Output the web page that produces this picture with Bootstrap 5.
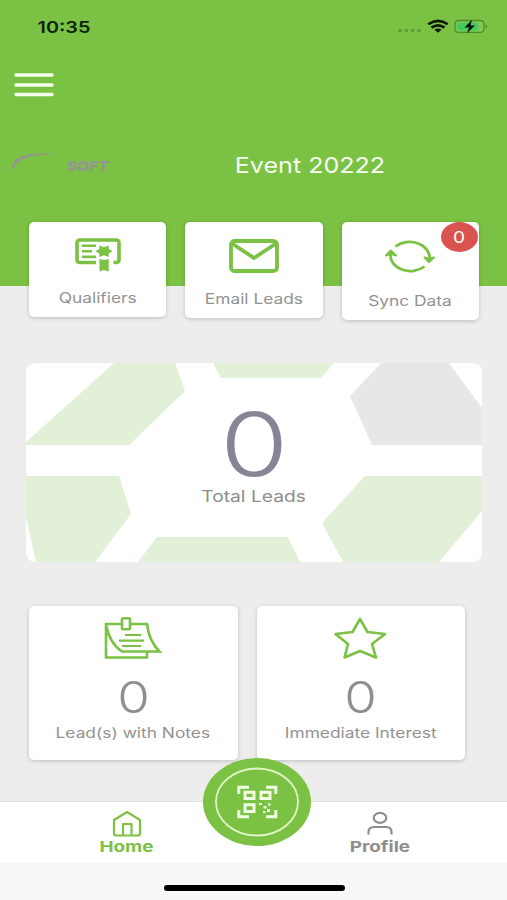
<!DOCTYPE html>
<html lang="en">
<head>
<meta charset="utf-8">
<meta name="viewport" content="width=device-width, initial-scale=1">
<title>Event 20222</title>
<link href="https://cdn.jsdelivr.net/npm/bootstrap@5.3.0/dist/css/bootstrap.min.css" rel="stylesheet">
<style>
:root{--leaf:#7bc143;--ink:#929292}
body{font-family:Inter,"Liberation Sans",sans-serif;background:#ededed;color:var(--ink);height:900px;overflow:hidden}
svg{display:block;overflow:visible}
.stretch{display:inline-block;transform:scaleX(1.2);white-space:nowrap}
.hero{background:var(--leaf);height:286px}
.status{height:54px;padding:0 19px 0 42px}
.clock{font-size:16.5px;font-weight:600;line-height:20px;color:#0d2408;margin-top:-1px}
.menu-btn{margin:19px 0 0 14px;width:40px;height:24px}
.event-row{margin-top:50px;padding-left:11px;height:34px}
.brand-arc{margin-bottom:4px}
.brand-word{font-size:13px;font-weight:900;font-style:italic;line-height:12px;color:#93978f;margin:4px 0 0 17px}
.event-name{font-size:22px;line-height:30px;color:#f6fff0;transform:scaleX(1.14);margin-top:1px}
.event-box{width:150px;margin-left:130px}
.tiles{margin-top:-64px;padding:0 28px 0 29px;gap:19px;height:99px}
.tile{width:137.4px;border:0;border-radius:5px;box-shadow:0 1px 4px rgba(0,0,0,.2);background:#fff}
.tile-a{height:95px}.tile-b{height:96px}.tile-c{height:98px}
.caption-sm{font-size:14.1px;line-height:18px;transform:scaleX(1.23)}
.tile-c .caption-sm{padding-top:1px}
.tile-b .caption-sm{padding-top:1px}
.count-dot{right:1px;top:0;width:37px;height:30px;border-radius:50%;background:#d9534f;color:#fff;font-size:16px}
.total{margin:42px 25px 0 26px;height:199px;border:0;border-radius:9px;background:#fff;overflow:hidden}
.total-body{padding-top:38px}
.total-num{font-size:88px;line-height:86px;color:#878496;height:86px;font-weight:350}
.total-num .stretch{transform:scaleX(1.26)}
.total-label{font-size:16px;line-height:20px;color:#8c8c8c;margin-top:-1px}
.pair{margin-top:44px;padding-left:29px;gap:19px}
.stat{width:208.5px;height:154px;border:0;border-radius:5px;box-shadow:0 1px 4px rgba(0,0,0,.2);background:#fff}
.stat-icon{margin-top:11px}
.stat-num{font-size:44px;line-height:48px;color:#8f8f8f;margin:14px 0 3px;font-weight:350}
.tabs{margin-top:41px;height:62px;background:#fff;border-top:1px solid #e2e2e2;padding:0 67px}
.tab-item{font-weight:700;font-size:15px;line-height:20px;color:#8e8e8e;text-decoration:none;width:120px}
.tab-item .stretch{transform:scaleX(1.26)}
.tab-item.on{color:var(--leaf)}
.scan{left:203px;top:-44px;width:108px;height:88px}
.foot{height:37px;background:#f8f8f8;padding-left:2px}
.bar{width:181px;height:6px;border-radius:3px;background:#000;margin-top:13px}
</style>
<script src="https://cdn.jsdelivr.net/npm/bootstrap@5.3.0/dist/js/bootstrap.bundle.min.js"></script>
</head>
<body class="d-flex flex-column">
<header class="hero flex-shrink-0">
  <div class="status d-flex align-items-center justify-content-between">
    <span class="clock stretch">10:35</span>
    <svg width="91" height="16" viewBox="0 0 91 16">
      <g fill="#5d9a34"><circle cx="3" cy="11.500" r="1.800"/><circle cx="9.300" cy="11.500" r="1.800"/><circle cx="15.600" cy="11.500" r="1.800"/><circle cx="21.900" cy="11.500" r="1.800"/></g>
      <g fill="none" stroke="#0b1606" stroke-width="2.6"><path d="M31.300 5.200Q41-1.500 50.700 5.200"/><path d="M34.500 8.600Q41 4 47.500 8.600"/></g><path d="M37.500 10.800Q41 8.400 44.500 10.800L41 13.800Z" fill="#0b1606"/>
      <rect x="58" y="1.500" width="29" height="11.800" rx="3.600" fill="#7cc850" stroke="#4f8e2b" stroke-width="1.300"/>
      <rect x="60" y="3.400" width="21" height="8" rx="2" fill="#42cc60"/>
      <path d="M88.600 5.300q3.400 2.100 0 4.300z" fill="#4f8e2b"/>
      <path d="M75 .800L67.500 8.400H72L70 14.300 78 6.400H73.500z" fill="#071006"/>
    </svg>
  </div>
  <svg class="menu-btn" viewBox="0 0 40 24" role="button" aria-label="Menu"><path d="M2 2H38M2 12H38M2 21.500H38" stroke="#f3fde9" stroke-width="3.6" stroke-linecap="round"/></svg>
  <div class="event-row d-flex align-items-center">
    <svg class="brand-arc" width="42" height="20" viewBox="0 0 42 20"><path d="M2.500 18.500C-2 8 12 0 40 2.500C20 1.500 3 7 2.500 18.500Z" fill="#93978f" stroke="#93978f" stroke-width=".8"/></svg>
    <span class="brand-word stretch">SOFT</span>
    <div class="event-box text-center d-flex justify-content-center"><span class="event-name stretch">Event 20222</span></div>
  </div>
</header>

<section class="tiles d-flex align-items-start flex-shrink-0">
  <div class="card tile tile-a align-items-center">
    <svg class="mt-3" width="46" height="35" viewBox="0 0 46 35">
      <path d="M21 24.500H5Q2 24.500 2 21.500V5Q2 2 5 2H41Q44 2 44 5V21.500Q44 24.500 41 24.500H38.500" fill="none" stroke="#7bc143" stroke-width="3.600"/>
      <path d="M7 7.700H21M7 13.200H17M7 18.900H21" stroke="#7bc143" stroke-width="2.600"/>
      <path d="M24.500 7.500L29 9.200 33.500 7.500 33.800 11 37.500 13.200 33.800 15.500 33.500 19 29 17.300 24.500 19 24.200 15.500 20.500 13.200 24.200 11Z M24.500 21L29 22 33.700 21V33.500L29 32 24.500 33.500Z" fill="#7bc143"/>
    </svg>
    <span class="caption-sm stretch mt-3">Qualifiers</span>
  </div>
  <div class="card tile tile-b align-items-center">
    <svg class="mt-3" width="50" height="35" viewBox="0 0 50 35"><g fill="none" stroke="#7bc143" stroke-width="3.800"><rect x="2" y="3" width="46" height="30" rx="3.500"/><path d="M3 5.500L25 20 47 5.500"/></g></svg>
    <span class="caption-sm stretch mt-3">Email Leads</span>
  </div>
  <div class="card tile tile-c align-items-center position-relative">
    <svg class="mt-3" width="50" height="37" viewBox="0 0 50 37"><g fill="none" stroke="#7bc143" stroke-width="2.800"><path d="M10.500 8.500A20 15.600 0 0 1 44.500 21"/><path d="M39.500 28.500A20 15.600 0 0 1 5.500 16"/></g><path d="M39.500 19.500L44 24 49 19.500 44.500 21ZM1 17.500L5.800 12.500 11 17.500 5.800 15.800Z" fill="#7bc143" stroke="#7bc143" stroke-width="2" stroke-linejoin="round"/></svg>
    <span class="caption-sm stretch mt-3">Sync Data</span>
    <span class="count-dot position-absolute d-flex align-items-center justify-content-center"><span class="stretch">0</span></span>
  </div>
</section>

<section class="card total flex-shrink-0">
  <svg class="position-absolute top-0 start-0" width="456" height="199" viewBox="0 0 456 199">
    <path fill="#e3f0d8" d="M88 0H149L159 28 103 82H0V79ZM187 0H308L295 15H195ZM0 113H93L105 151 69 199H10L0 154ZM131 174H262L274 199H112ZM339 113H456V148L413 199H317L296 160Z"/>
    <path fill="#e7e7e7" d="M355 0H423L456 45V82H346L324 33Z"/>
  </svg>
  <div class="total-body position-relative d-flex flex-column align-items-center">
    <div class="total-num"><span class="stretch">0</span></div>
    <span class="total-label stretch">Total Leads</span>
  </div>
</section>

<section class="pair d-flex flex-shrink-0">
  <div class="card stat align-items-center">
    <svg class="stat-icon" width="58" height="42" viewBox="0 0 58 42">
      <g fill="none" stroke="#7bc143" stroke-width="2.600"><path d="M17 7H2V40.500H43V35M27 7H43Q45 24 55.500 34.500H18Q6 27 2 8"/><rect x="18" y="1.300" width="8" height="11" rx="1" fill="#fff"/><path d="M21 18H37M15 23.700H40M18 29H37" stroke-width="2.200"/></g>
    </svg>
    <span class="stat-num stretch">0</span>
    <span class="caption-sm stretch">Lead(s) with Notes</span>
  </div>
  <div class="card stat align-items-center">
    <svg class="stat-icon" width="54" height="42" viewBox="0 0 54 42"><path d="M26 2L33.500 15 51 17 38 27 42 40.500 26 34 10.500 40.500 14 27 1.500 17 18.500 15Z" fill="none" stroke="#7bc143" stroke-width="2.600" stroke-linejoin="round"/></svg>
    <span class="stat-num stretch">0</span>
    <span class="caption-sm stretch">Immediate Interest</span>
  </div>
</section>

<nav class="tabs position-relative d-flex justify-content-between flex-shrink-0">
  <a href="#" class="tab-item on d-flex flex-column align-items-center pt-2">
    <svg width="30" height="27" viewBox="0 0 30 27"><path d="M2 10L15 2 28 10V23.500Q28 25.500 26 25.500H4Q2 25.500 2 23.500ZM11 25V14H19.500V25" fill="none" stroke="#7bc143" stroke-width="2.200" stroke-linejoin="round"/></svg>
    <span class="stretch">Home</span>
  </a>
  <a href="#" class="tab-item d-flex flex-column align-items-center pt-2">
    <svg width="28" height="27" viewBox="0 0 28 27"><g fill="none" stroke="#8e8e8e" stroke-width="2.200"><ellipse cx="14" cy="7.800" rx="6.300" ry="5"/><path d="M2.500 24.500V22Q2.500 17 8 17H20Q25.500 17 25.500 22V24.500"/></g></svg>
    <span class="stretch">Profile</span>
  </a>
  <svg class="scan position-absolute" viewBox="0 0 108 88" role="button" aria-label="Scan">
    <ellipse cx="54" cy="44" rx="54" ry="44" fill="#7bc143"/>
    <ellipse cx="54" cy="44" rx="41" ry="33.500" fill="none" stroke="#dff7c8" stroke-width="1.800"/>
    <g fill="none" stroke="#f1ffe4" stroke-width="3"><path d="M35.800 36V29.200H46M63 29.200H72.800V36M35.800 52V58.800H46M63 58.800H72.800V52"/><path d="M42 34.200H51V40.500H42ZM58 34.200H67V40.500H58ZM42 46.800H51V53.500H42Z"/></g>
    <path d="M56 45h3v2h-3zM65 45.500h2.500v2H65zM60.500 48h3v2.500h-3zM64 51h3v3h-3zM60 53h2.500v2H60z" fill="#f1ffe4"/>
  </svg>
</nav>
<footer class="foot d-flex justify-content-center align-items-center flex-shrink-0"><div class="bar"></div></footer>
</body>
</html>
